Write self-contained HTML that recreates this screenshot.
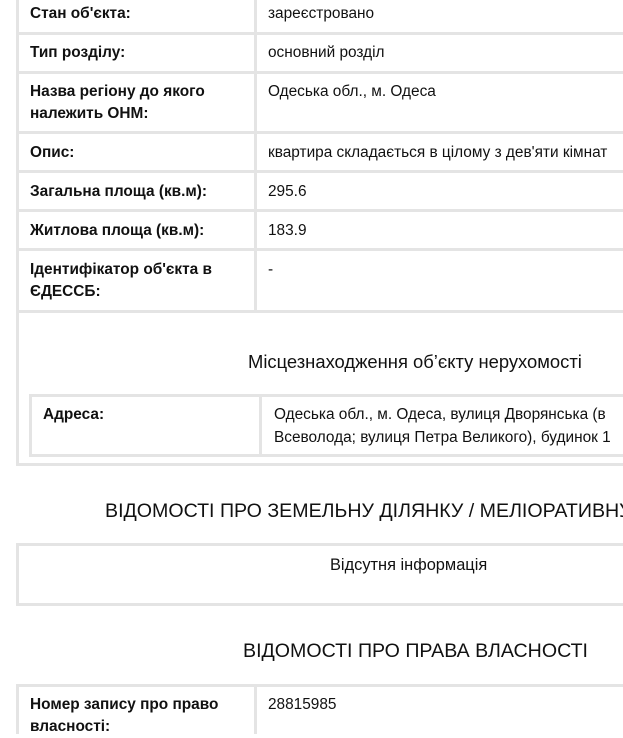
<!DOCTYPE html>
<html><head><meta charset="utf-8"><style>
body{margin:0;width:623px;height:731px;overflow:hidden;background:#fff;font-family:"Liberation Sans",Arial,sans-serif;color:#111;position:relative}
.h{position:absolute;background:#e4e4e4;height:3px}
.v{position:absolute;background:#e4e4e4;width:3px}
.t{position:absolute;font-size:15.4px;line-height:22px;white-space:nowrap}
.b{font-weight:bold}
.hd{position:absolute;font-size:19.6px;white-space:nowrap;line-height:24px}
</style></head><body>
<div class="v" style="left:16px;top:0;height:466px"></div>
<div class="v" style="left:254px;top:0;height:312px"></div>
<div class="h" style="left:16px;top:32px;width:620px"></div>
<div class="h" style="left:16px;top:71px;width:620px"></div>
<div class="h" style="left:16px;top:131px;width:620px"></div>
<div class="h" style="left:16px;top:170px;width:620px"></div>
<div class="h" style="left:16px;top:209px;width:620px"></div>
<div class="h" style="left:16px;top:248px;width:620px"></div>
<div class="h" style="left:16px;top:310px;width:620px"></div>
<div class="t b" style="left:30px;top:3px">Стан об'єкта:</div>
<div class="t" style="left:268px;top:3px">зареєстровано</div>
<div class="t b" style="left:30px;top:42px">Тип розділу:</div>
<div class="t" style="left:268px;top:42px">основний розділ</div>
<div class="t b" style="left:30px;top:81px">Назва регіону до якого<br>належить ОНМ:</div>
<div class="t" style="left:268px;top:81px">Одеська обл., м. Одеса</div>
<div class="t b" style="left:30px;top:142px">Опис:</div>
<div class="t" style="left:268px;top:142px">квартира складається в цілому з дев'яти кімнат</div>
<div class="t b" style="left:30px;top:181px">Загальна площа (кв.м):</div>
<div class="t" style="left:268px;top:181px">295.6</div>
<div class="t b" style="left:30px;top:220px">Житлова площа (кв.м):</div>
<div class="t" style="left:268px;top:220px">183.9</div>
<div class="t b" style="left:30px;top:259px">Ідентифікатор об'єкта в<br>ЄДЕССБ:</div>
<div class="t" style="left:268px;top:259px">-</div>
<div class="hd" style="left:248px;top:350px;font-size:18.4px">Місцезнаходження об’єкту нерухомості</div>
<div class="h" style="left:29px;top:394px;width:610px"></div>
<div class="h" style="left:29px;top:454px;width:610px"></div>
<div class="v" style="left:29px;top:394px;height:62px"></div>
<div class="v" style="left:259px;top:394px;height:62px"></div>
<div class="t b" style="left:43px;top:404px">Адреса:</div>
<div class="t" style="left:274px;top:403px;line-height:23px">Одеська обл., м. Одеса, вулиця Дворянська (в<br>Всеволода; вулиця Петра Великого), будинок 1</div>
<div class="h" style="left:16px;top:463px;width:620px"></div>
<div class="hd" style="left:105px;top:499px">ВІДОМОСТІ ПРО ЗЕМЕЛЬНУ ДІЛЯНКУ / МЕЛІОРАТИВНУ</div>
<div class="h" style="left:16px;top:543px;width:620px"></div>
<div class="h" style="left:16px;top:603px;width:620px"></div>
<div class="v" style="left:16px;top:543px;height:63px"></div>
<div class="t" style="left:330px;top:554px;font-size:16.4px">Відсутня інформація</div>
<div class="hd" style="left:243px;top:639px">ВІДОМОСТІ ПРО ПРАВА ВЛАСНОСТІ</div>
<div class="h" style="left:16px;top:684px;width:620px"></div>
<div class="v" style="left:16px;top:684px;height:50px"></div>
<div class="v" style="left:254px;top:684px;height:50px"></div>
<div class="t b" style="left:30px;top:694px">Номер запису про право<br>власності:</div>
<div class="t" style="left:268px;top:694px">28815985</div>
</body></html>
